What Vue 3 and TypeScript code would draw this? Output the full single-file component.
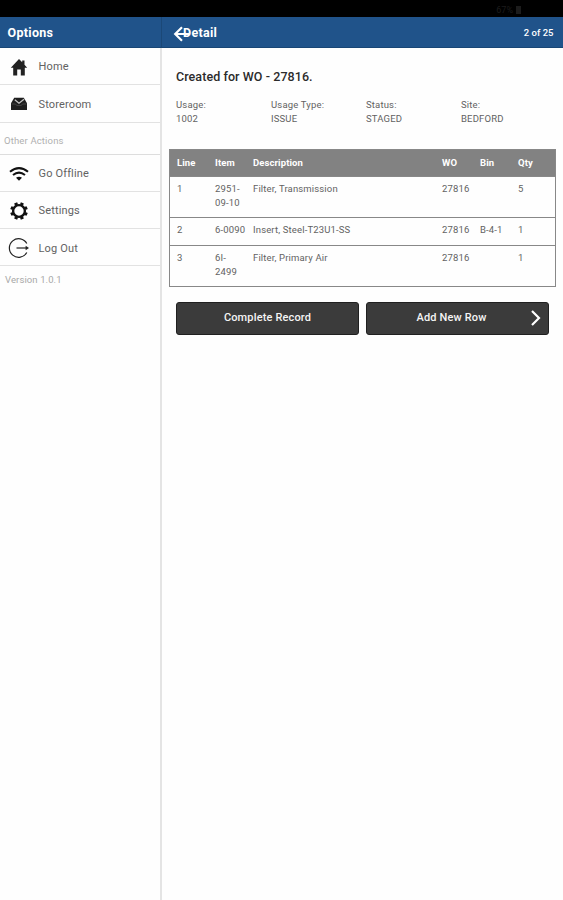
<script setup lang="ts">
interface MenuItem {
  icon: string
  label: string
}

interface Row {
  line: number
  item: string
  description: string
  wo: string
  bin: string
  qty: number
}

const mainItems: MenuItem[] = [
  { icon: 'home', label: 'Home' },
  { icon: 'store', label: 'Storeroom' },
]

const otherItems: MenuItem[] = [
  { icon: 'wifi', label: 'Go Offline' },
  { icon: 'gear', label: 'Settings' },
  { icon: 'logout', label: 'Log Out' },
]

const fields = [
  { label: 'Usage:', value: '1002' },
  { label: 'Usage Type:', value: 'ISSUE' },
  { label: 'Status:', value: 'STAGED' },
  { label: 'Site:', value: 'BEDFORD' },
]

const rows: Row[] = [
  { line: 1, item: '2951-09-10', description: 'Filter, Transmission', wo: '27816', bin: '', qty: 5 },
  { line: 2, item: '6-0090', description: 'Insert, Steel-T23U1-SS', wo: '27816', bin: 'B-4-1', qty: 1 },
  { line: 3, item: '6I-2499', description: 'Filter, Primary Air', wo: '27816', bin: '', qty: 1 },
]
</script>

<template>
  <div class="screen">
    <div class="status">
      <span>67%</span>
      <i class="battery"></i>
    </div>
    <div class="body">
      <aside class="side">
        <header class="bar">Options</header>
        <nav>
          <a v-for="m in mainItems" :key="m.label" class="entry">
            <svg v-if="m.icon === 'home'" class="icon" viewBox="0 0 22 22">
              <path d="M11 3 2.800 11.800h2.400V19.400h4v-5.900h3.600V19.400h4v-7.600h2.400L16.500 8.700V4.500h-2.300v1.700z" fill="#222" />
            </svg>
            <svg v-else class="icon" viewBox="0 0 22 22">
              <path d="M6.200 4.800h9.600l3.200 5.500v6.700H3v-6.700z" fill="#1e1e1e" />
              <path d="M6.800 6.800 11 10.200l5-4" fill="none" stroke="#c4c4c4" stroke-width="1.300" />
              <path d="M3.600 11h3.600l1.800 1.400h4l1.800-1.400h3.600" fill="none" stroke="#555" stroke-width="0.700" />
            </svg>
            <span>{{ m.label }}</span>
          </a>
          <div class="divider">Other Actions</div>
          <a v-for="m in otherItems" :key="m.label" class="entry">
            <svg v-if="m.icon === 'wifi'" class="icon" viewBox="0 0 22 22">
              <path d="M2 8.800Q11 1.600 20 8.800M5 12Q11 7.200 17 12" fill="none" stroke="#111" stroke-width="2.100" />
              <path d="M8 14.800Q11 12.600 14 14.800L11 17.800z" fill="#111" />
            </svg>
            <svg v-else-if="m.icon === 'gear'" class="icon" viewBox="0 0 22 22">
              <circle cx="11" cy="11" r="5.900" fill="none" stroke="#111" stroke-width="2.400" />
              <g stroke="#111" stroke-width="3.200">
                <path
                  v-for="a in [22.5, 67.5, 112.5, 157.5, 202.5, 247.5, 292.5, 337.5]"
                  :key="a"
                  d="M11 2.200v2.500"
                  :transform="`rotate(${a} 11 11)`"
                />
              </g>
            </svg>
            <svg v-else class="icon" viewBox="0 0 22 22">
              <path d="M18.800 6.500A9.300 9.300 0 1 0 18.800 15.500" fill="none" stroke="#222" stroke-width="1.200" />
              <path d="M8.500 11H19" fill="none" stroke="#222" stroke-width="1.200" />
              <path d="M17.600 8.700 21 11l-3.400 2.300z" fill="#222" />
            </svg>
            <span>{{ m.label }}</span>
          </a>
        </nav>
        <div class="version">Version 1.0.1</div>
      </aside>

      <main class="main">
        <header class="bar detail-bar">
          <svg class="back" viewBox="0 0 18 16">
            <path d="M9 1.200 2.200 8 9 14.800M2.500 8H16" fill="none" stroke="#fff" stroke-width="2.200" />
          </svg>
          <span class="title">Detail</span>
          <span class="count">2 of 25</span>
        </header>
        <h1>Created for WO - 27816.</h1>
        <dl class="fields">
          <div v-for="f in fields" :key="f.label">
            <dt>{{ f.label }}</dt>
            <dd>{{ f.value }}</dd>
          </div>
        </dl>
        <div class="table">
          <div class="tr head">
            <span>Line</span><span>Item</span><span>Description</span><span>WO</span><span>Bin</span><span>Qty</span>
          </div>
          <div v-for="r in rows" :key="r.line" class="tr">
            <span>{{ r.line }}</span>
            <span class="item">{{ r.item }}</span>
            <span class="desc">{{ r.description }}</span>
            <span>{{ r.wo }}</span>
            <span>{{ r.bin }}</span>
            <span>{{ r.qty }}</span>
          </div>
        </div>
        <div class="actions">
          <button type="button">Complete Record</button>
          <button type="button" class="next">
            Add New Row
            <svg class="chevron" viewBox="0 0 12 18">
              <path d="M2 2l7 7-7 7" fill="none" stroke="#fff" stroke-width="2.200" />
            </svg>
          </button>
        </div>
      </main>
    </div>
  </div>
</template>

<style>
body {
  margin: 0;
  background: #fff;
}
</style>

<style scoped>
.screen {
  width: 563px;
  height: 900px;
  display: flex;
  flex-direction: column;
  overflow: hidden;
  background: #fefefe;
  color: #626262;
  font-family: Roboto, 'Liberation Sans', sans-serif;
}
.status {
  flex: none;
  box-sizing: border-box;
  height: 17px;
  padding: 2px 42px 0 0;
  display: flex;
  justify-content: flex-end;
  align-items: center;
  gap: 3px;
  background: #000;
  color: #1c1c1c;
  font-size: 9px;
}
.battery {
  width: 5px;
  height: 8px;
  background: #1c1c1c;
}
.body {
  flex: 1;
  display: flex;
}
.side {
  box-sizing: border-box;
  width: 162px;
  border-right: 2px solid #e4e4e4;
}
.bar {
  box-sizing: border-box;
  height: 31px;
  margin-right: -2px;
  padding: 1px 0 0 7.500px;
  display: flex;
  align-items: center;
  background: #20538a;
  border-right: 1px solid #1b4877;
  border-bottom: 1px solid #184675;
  color: #fff;
  font-size: 12.500px;
  font-weight: 700;
  letter-spacing: 0.300px;
}
.entry {
  box-sizing: border-box;
  height: 37.300px;
  padding: 1.600px 0 0 8px;
  display: flex;
  align-items: center;
  gap: 8.500px;
  border-bottom: 1px solid #e2e2e2;
  font-size: 11px;
  letter-spacing: 0.150px;
}
.icon {
  width: 22px;
  height: 22px;
}
.divider {
  box-sizing: border-box;
  height: 32px;
  padding: 4px 0 0 4px;
  display: flex;
  align-items: center;
  border-bottom: 1px solid #ddd;
  color: #b0b0b0;
  font-size: 9.500px;
  letter-spacing: 0.150px;
}
.version {
  padding: 8px 0 0 5px;
  color: #a8a8a8;
  font-size: 9.500px;
  line-height: 12px;
  letter-spacing: 0.100px;
}
.main {
  flex: 1;
}
.detail-bar {
  margin-right: 0;
  padding: 1px 9.500px 0 11px;
  border-right: 0;
}
.back {
  width: 18px;
  height: 16px;
  margin: 2px -8px 0 0;
}
.count {
  margin-left: auto;
  font-size: 9.500px;
  font-weight: 500;
  letter-spacing: 0;
}
h1 {
  margin: 20px 0 0 14px;
  color: #2b2b2b;
  font-size: 12.500px;
  line-height: 18px;
  font-weight: 500;
  letter-spacing: 0.070px;
}
.fields {
  margin: 12px 0 0 14px;
  display: grid;
  grid-template-columns: repeat(4, 95px);
  font-size: 9.500px;
  line-height: 14px;
  letter-spacing: 0.170px;
}
.fields dd {
  margin: 0;
}
.table {
  margin: 23px 7px 0;
  border: 1px solid #888;
}
.tr {
  box-sizing: border-box;
  padding: 5px 0 7.500px 7px;
  display: grid;
  grid-template-columns: 38px 38px 189px 38px 38px 1fr;
  border-top: 1px solid #888;
  font-size: 9.500px;
  line-height: 14px;
  letter-spacing: 0.150px;
}
.head {
  padding: 6px 0 5.500px 7px;
  border-top: 0;
  background: #828282;
  color: #fff;
  font-weight: 700;
  letter-spacing: 0.100px;
}
.item {
  width: 31.800px;
}
.actions {
  margin: 15px 14px 0;
  display: grid;
  grid-template-columns: 1fr 1fr;
  gap: 7px;
}
button {
  position: relative;
  height: 32.500px;
  padding: 0 0 2px;
  border: 1px solid #202020;
  border-radius: 3px;
  background: #3b3b3b;
  color: #f4f4f4;
  font: 500 11px Roboto, 'Liberation Sans', sans-serif;
  letter-spacing: 0.150px;
}
.next {
  padding-right: 12px;
}
.chevron {
  position: absolute;
  top: 6px;
  right: 6px;
  width: 12px;
  height: 18px;
}
</style>
